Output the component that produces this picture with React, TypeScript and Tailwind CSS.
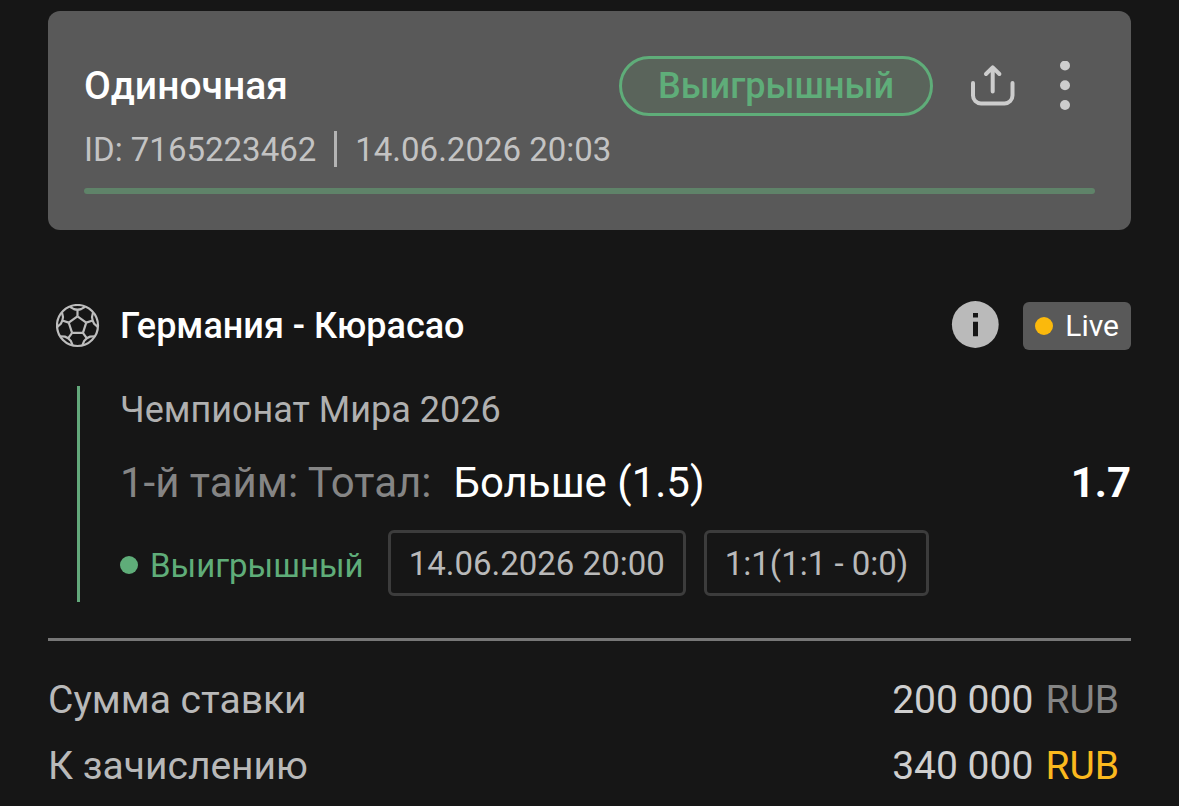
import type { ReactNode } from "react";

const FONT = "font-[Roboto,'Noto_Sans',sans-serif]";
const CHIP =
  "flex h-[66px] items-center whitespace-nowrap rounded-md border-3 border-[#3c3c3c] px-[18px] text-[33px] text-[#b9b9b9]";

// One fifth of the ball: pentagon edge, seam and outer patch
const BALL_SEGMENT = "M22 12.8 30.7 19.1M22 12.8V6M14.4 3.2 18.4 5.6Q22 6.6 25.6 5.6L29.6 3.2";
const BALL_TURNS = [0, 72, 144, 216, 288];

function BallIcon() {
  return (
    <svg viewBox="0 0 44 44" className="size-11 shrink-0" fill="none" stroke="#bdbdbd" strokeWidth="2.2" aria-hidden="true">
      <circle cx="21.5" cy="21.5" r="20.5" />
      {BALL_TURNS.map((deg) => (
        <path key={deg} d={BALL_SEGMENT} transform={`translate(-0.5 -0.5) rotate(${deg} 22 22)`} />
      ))}
    </svg>
  );
}

function ShareIcon() {
  return (
    <svg viewBox="0 0 44 44" className="size-11" fill="none" stroke="#cdcdcd" strokeWidth="4" strokeLinecap="round" strokeLinejoin="round" aria-hidden="true">
      <path d="M2 19v12.500a8 8 0 0 0 8 8h23.500a8 8 0 0 0 8-8V19" />
      <path d="M21.700 27.500V3.500M15 10l6.700-6.700L28.400 10" />
    </svg>
  );
}

function DotsIcon() {
  return (
    <svg viewBox="0 0 10 50" className="h-[50px] w-2.5" fill="#cdcdcd" aria-hidden="true">
      <circle cx="5" cy="4.500" r="5" />
      <circle cx="5" cy="24.300" r="5" />
      <circle cx="5" cy="44" r="5" />
    </svg>
  );
}

function InfoIcon() {
  return (
    <svg viewBox="0 0 48 48" className="size-12" aria-hidden="true">
      <circle cx="24.300" cy="23.500" r="23.400" fill="#bababa" />
      <path fill="#161616" d="M22 12h5v4.500h-5zM22 20.800h5v14.500h-5z" />
    </svg>
  );
}

function IconButton({ label, children }: { label: string; children: ReactNode }) {
  return (
    <button type="button" aria-label={label} className="flex h-[60px] w-[60px] items-center justify-center">
      {children}
    </button>
  );
}

function SumRow({
  label,
  amount,
  currencyClass,
}: {
  label: string;
  amount: string;
  currencyClass: string;
}) {
  return (
    <div className="flex h-[66px] items-center justify-between pr-3">
      <dt className="text-[#b9b9b9]">{label}</dt>
      <dd className="flex gap-3 text-[#cfcfcf]">
        {amount}
        <span className={currencyClass}>RUB</span>
      </dd>
    </div>
  );
}

export default function App() {
  return (
    <main className={`min-h-screen bg-[#161616] px-12 pt-[11px] leading-none ${FONT}`}>
      <header className="rounded-xl bg-[#595959] px-9 pt-[45px] pb-9">
        <div className="flex items-center">
          <h1 className="text-[39px] font-medium text-white">Одиночная</h1>
          <span className="ml-auto flex h-[60px] items-center rounded-full border-3 border-[#5fad79] bg-[#5a645b] px-9 text-[36px] font-medium text-[#5fad79]">
            Выигрышный
          </span>
          <div className="ml-[30px] flex gap-3">
            <IconButton label="Поделиться">
              <ShareIcon />
            </IconButton>
            <IconButton label="Ещё">
              <DotsIcon />
            </IconButton>
          </div>
        </div>
        <div className="mt-[15px] flex h-9 items-center text-[33px] text-[#c3c3c3]">
          <span>ID: 7165223462</span>
          <span className="mx-[18px] h-9 w-[3px] bg-[#b4b4b4]" />
          <time>14.06.2026 20:03</time>
        </div>
        <div className="mt-[21px] h-1.5 rounded-full bg-[#5f8369]" />
      </header>

      <section>
        <div className="mt-[72px] flex h-12 items-center">
          <div className="ml-2">
            <BallIcon />
          </div>
          <h2 className="ml-5 text-[36px] font-medium text-white">Германия - Кюрасао</h2>
          <button type="button" aria-label="Информация" className="ml-auto pb-[3px]">
            <InfoIcon />
          </button>
          <span className="ml-6 flex h-12 items-center gap-3 rounded-md bg-[#595959] px-3 text-[30px] text-white">
            <span className="size-[18px] rounded-full bg-[#fbb90c]" />
            Live
          </span>
        </div>

        <div className="mt-9 ml-[29px] border-l-3 border-[#63a87b] pb-1.5 pl-10">
          <p className="text-[36px] leading-12 text-[#b0b0b0]">Чемпионат Мира 2026</p>
          <div className="flex h-24 items-center justify-between pt-0.5 text-[42px]">
            <p className="flex gap-[22px]">
              <span className="text-[#858585]">1-й тайм: Тотал:</span>
              <span className="text-white">Больше (1.5)</span>
            </p>
            <strong className="font-bold text-white">1.7</strong>
          </div>
          <div className="flex items-center">
            <p className="flex items-center gap-3 pt-1 text-[33px] text-[#5fad79]">
              <span className="size-[18px] rounded-full bg-[#5fad79]" />
              Выигрышный
            </p>
            <time className={`ml-6 ${CHIP}`}>14.06.2026 20:00</time>
            <span className={`ml-[18px] ${CHIP}`}>1:1(1:1 - 0:0)</span>
          </div>
        </div>
      </section>

      <dl className="mt-9 border-t-3 border-[#777777] pt-[26px] text-[39px]">
        <SumRow label="Сумма ставки" amount="200 000" currencyClass="text-[#858585]" />
        <SumRow label="К зачислению" amount="340 000" currencyClass="text-[#fbb91e]" />
      </dl>
    </main>
  );
}
